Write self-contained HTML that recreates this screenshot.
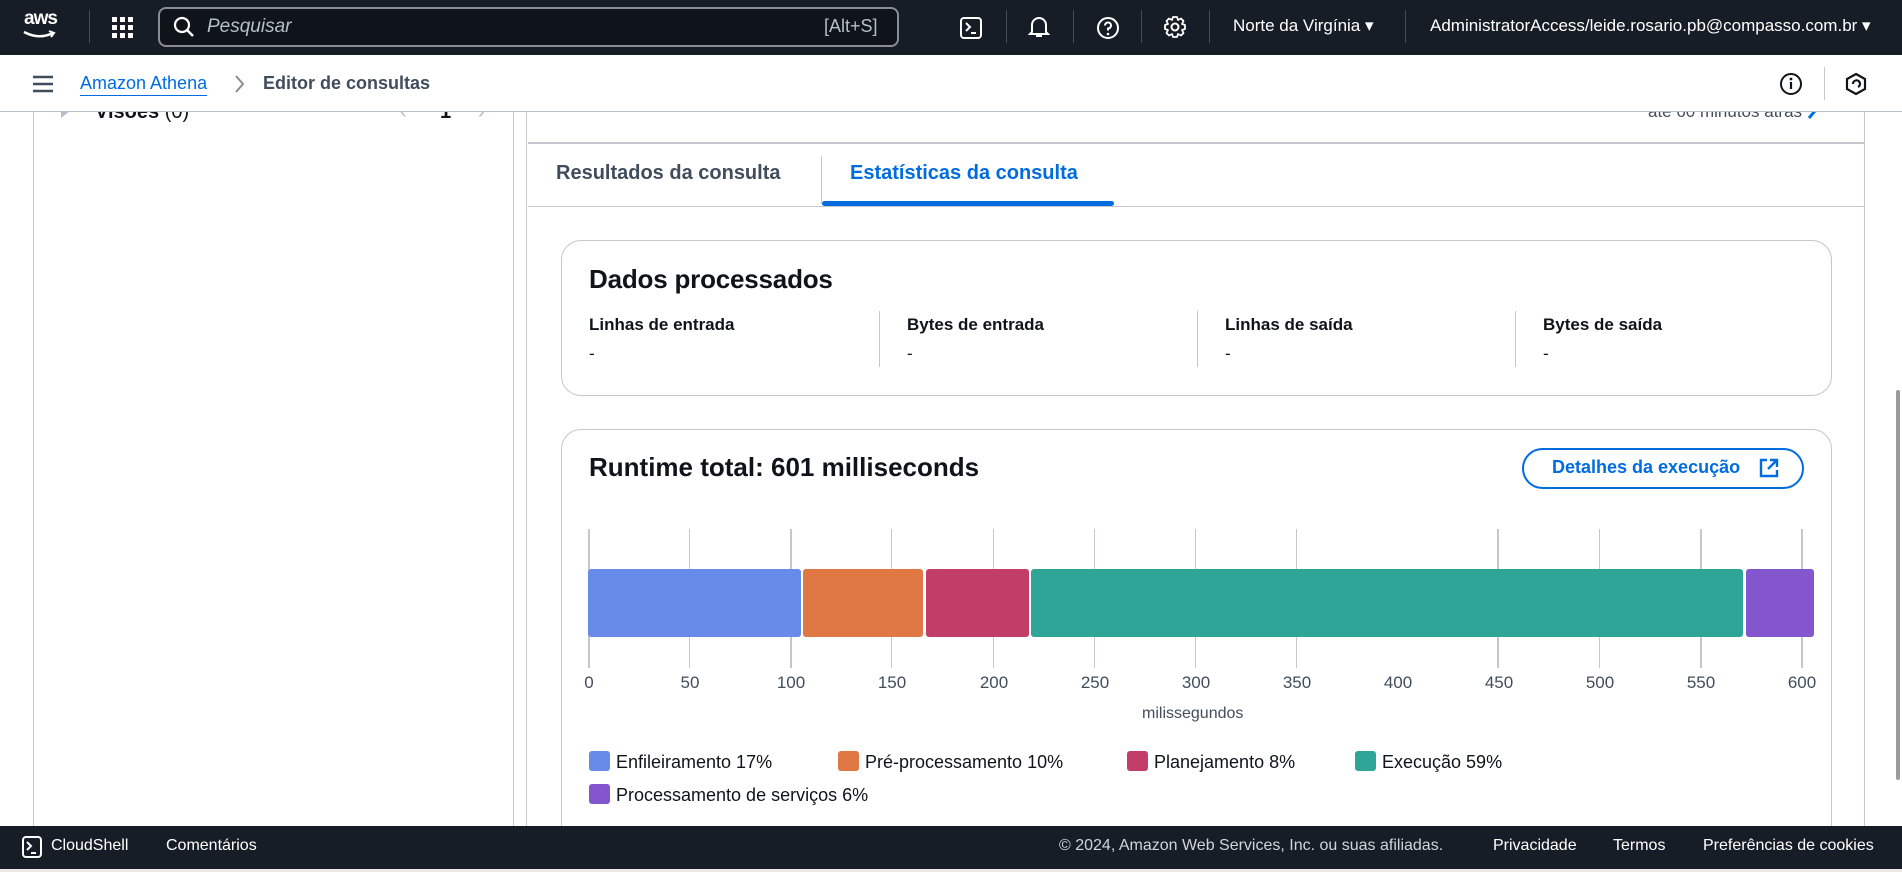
<!DOCTYPE html>
<html><head><meta charset="utf-8"><style>
*{box-sizing:border-box;margin:0;padding:0}
body{width:1902px;height:872px;overflow:hidden;background:#fff;font-family:"Liberation Sans",sans-serif;color:#0f141a;position:relative}
.a{position:absolute;white-space:nowrap}
.top{left:0;top:0;width:1902px;height:55px;background:#161d26}
.foot{left:0;top:826px;width:1902px;height:43px;background:#161d26}
.wt{color:#fff;font-size:17px}
.sep{position:absolute;width:1px;background:#414d5c}
.card{position:absolute;border:1px solid #c6c6cd;border-radius:20px;background:#fff}
.lbl{font-size:17px;font-weight:bold}
.tick{position:absolute;top:673px;font-size:17px;color:#414d5c;transform:translateX(-50%)}
.grid{position:absolute;top:529px;height:139px;width:2px;background:#c6c6cd}
.bar{position:absolute;top:569px;height:68px;border-radius:3px}
.sw{position:absolute;width:21px;height:20px;border-radius:3px}
.lg{position:absolute;font-size:18px;color:#0f141a}
</style></head><body>
<div class="a top"></div>
<div class="a" style="left:24px;top:8px;color:#fff;font-size:19px;font-weight:bold;letter-spacing:-1px">aws</div>
<svg class="a" style="left:22px;top:30px" width="34" height="10"><path d="M2 2 Q17 10 31 3" stroke="#fff" stroke-width="2.5" fill="none"/><path d="M27 1 L32 3 L29 7" stroke="#fff" stroke-width="2" fill="none"/></svg>
<div class="sep" style="left:89px;top:10px;height:33px"></div>
<svg class="a" style="left:112px;top:17px" width="22" height="22" fill="#fff"><rect x="0" y="0" width="5" height="5"/><rect x="8" y="0" width="5" height="5"/><rect x="16" y="0" width="5" height="5"/><rect x="0" y="8" width="5" height="5"/><rect x="8" y="8" width="5" height="5"/><rect x="16" y="8" width="5" height="5"/><rect x="0" y="16" width="5" height="5"/><rect x="8" y="16" width="5" height="5"/><rect x="16" y="16" width="5" height="5"/></svg>
<div class="a" style="left:158px;top:7px;width:741px;height:40px;border:2px solid #8c8c94;border-radius:8px;background:#0f141a"></div>
<svg class="a" style="left:173px;top:16px" width="22" height="22"><circle cx="9" cy="9" r="7" stroke="#fff" stroke-width="2.2" fill="none"/><path d="M14 14 L20 20" stroke="#fff" stroke-width="2.5"/></svg>
<div class="a" style="left:207px;top:16px;color:#b6bec9;font-size:19px;font-style:italic">Pesquisar</div>
<div class="a" style="left:824px;top:16px;color:#b6bec9;font-size:18px">[Alt+S]</div>
<svg class="a" style="left:960px;top:17px" width="22" height="22"><rect x="1" y="1" width="20" height="20" rx="3" stroke="#fff" stroke-width="2" fill="none"/><path d="M6 6 L10 10 L6 14 M11 16 H16" stroke="#fff" stroke-width="2" fill="none"/></svg>
<div class="sep" style="left:1006px;top:10px;height:33px"></div>
<svg class="a" style="left:1028px;top:15px" width="22" height="24"><path d="M4 17 V10 A7 7 0 0 1 18 10 V17 L20 19 H2 Z M8 21 H14" stroke="#fff" stroke-width="2" fill="none"/></svg>
<div class="sep" style="left:1073px;top:10px;height:33px"></div>
<svg class="a" style="left:1096px;top:16px" width="24" height="24"><circle cx="12" cy="12" r="10" stroke="#fff" stroke-width="2" fill="none"/><path d="M9 9.5 A3 3 0 1 1 12 12.5 V14.5" stroke="#fff" stroke-width="2" fill="none"/><circle cx="12" cy="18" r="1.3" fill="#fff"/></svg>
<div class="sep" style="left:1141px;top:10px;height:33px"></div>
<svg class="a" style="left:1163px;top:15px" width="24" height="24"><circle cx="12" cy="12" r="3.5" stroke="#fff" stroke-width="2" fill="none"/><path d="M10 2 H14 L15 5 L18 3.5 L20.5 6 L19 9 L22 10 V14 L19 15 L20.5 18 L18 20.5 L15 19 L14 22 H10 L9 19 L6 20.5 L3.5 18 L5 15 L2 14 V10 L5 9 L3.5 6 L6 3.5 L9 5 Z" stroke="#fff" stroke-width="1.8" fill="none" stroke-linejoin="round"/></svg>
<div class="sep" style="left:1209px;top:10px;height:33px"></div>
<div class="a wt" style="left:1233px;top:16px">Norte da Virgínia ▾</div>
<div class="sep" style="left:1405px;top:10px;height:33px"></div>
<div class="a wt" style="left:1430px;top:16px">AdministratorAccess/leide.rosario.pb@compasso.com.br ▾</div>

<!-- breadcrumb -->
<div class="a" style="left:0;top:111px;width:1902px;height:1px;background:#b6bec9"></div>
<svg class="a" style="left:33px;top:75px" width="20" height="18"><path d="M0 2H20M0 9H20M0 16H20" stroke="#414d5c" stroke-width="2.5"/></svg>
<div class="a" style="left:80px;top:73px;font-size:18px;color:#006ce0;border-bottom:1.5px solid #006ce0;padding-bottom:1px">Amazon Athena</div>
<svg class="a" style="left:233px;top:74px" width="12" height="20"><path d="M3 2 L10 10 L3 18" stroke="#8c8c94" stroke-width="2" fill="none"/></svg>
<div class="a" style="left:263px;top:73px;font-size:18px;font-weight:bold;color:#414d5c">Editor de consultas</div>
<svg class="a" style="left:1779px;top:72px" width="24" height="24"><circle cx="12" cy="12" r="10" stroke="#0f141a" stroke-width="2" fill="none"/><path d="M12 10V17" stroke="#0f141a" stroke-width="2.2"/><circle cx="12" cy="7" r="1.4" fill="#0f141a"/></svg>
<div class="a" style="left:1824px;top:67px;width:1px;height:33px;background:#c6c6cd"></div>
<svg class="a" style="left:1845px;top:72px" width="22" height="24"><path d="M11 2 L20 7 V17 L11 22 L2 17 V7 Z" stroke="#0f141a" stroke-width="2.2" fill="none"/><path d="M8 12 A3.5 3.5 0 1 1 13 15" stroke="#0f141a" stroke-width="2.2" fill="none"/></svg>

<!-- left panel -->
<div class="a" style="left:33px;top:112px;width:1px;height:714px;background:#c6c6cd"></div>
<div class="a" style="left:513px;top:112px;width:1px;height:714px;background:#c6c6cd"></div>
<div class="a" style="left:526px;top:112px;width:1px;height:714px;background:#c6c6cd"></div>
<div class="a" style="left:0;top:112px;width:1902px;height:12px;overflow:hidden">
 <div class="a" style="left:61px;top:-8px;width:0;height:0;border-left:9px solid #b6bec9;border-top:7px solid transparent;border-bottom:7px solid transparent"></div>
 <div class="a" style="left:95px;top:-11px;font-size:20px;font-weight:bold">Visões <span style="font-weight:normal">(0)</span></div>
 <div class="a" style="left:400px;top:-11px;font-size:20px;color:#b6bec9">‹</div>
 <div class="a" style="left:440px;top:-11px;font-size:20px;font-weight:bold">1</div>
 <div class="a" style="left:478px;top:-11px;font-size:20px;color:#b6bec9">›</div>
 <div class="a" style="left:1648px;top:-10px;font-size:17px;color:#414d5c">até 60 minutos atrás</div>
 <svg class="a" style="left:1806px;top:-10px" width="18" height="20"><path d="M3 16 L14 3" stroke="#006ce0" stroke-width="3"/></svg>
</div>
<div class="a" style="left:1864px;top:112px;width:1px;height:714px;background:#c6c6cd"></div>
<div class="a" style="left:1896px;top:390px;width:4px;height:390px;background:#9b9b9b;border-radius:2px"></div>

<!-- tabs -->
<div class="a" style="left:528px;top:142px;width:1336px;height:2px;background:#c6c6cd"></div>
<div class="a" style="left:528px;top:206px;width:1336px;height:1px;background:#c6c6cd"></div>
<div class="a" style="left:556px;top:162px;font-size:20px;font-weight:bold;color:#414d5c">Resultados da consulta</div>
<div class="a" style="left:821px;top:156px;width:1px;height:48px;background:#c6c6cd"></div>
<div class="a" style="left:850px;top:162px;font-size:20px;font-weight:bold;color:#006ce0">Estatísticas da consulta</div>
<div class="a" style="left:822px;top:201px;width:292px;height:5px;background:#006ce0;border-radius:3px"></div>

<!-- card 1 -->
<div class="card" style="left:561px;top:240px;width:1271px;height:156px"></div>
<div class="a" style="left:589px;top:264px;font-size:26px;font-weight:bold;letter-spacing:-0.2px">Dados processados</div>
<div class="a lbl" style="left:589px;top:315px">Linhas de entrada</div>
<div class="a lbl" style="left:907px;top:315px">Bytes de entrada</div>
<div class="a lbl" style="left:1225px;top:315px">Linhas de saída</div>
<div class="a lbl" style="left:1543px;top:315px">Bytes de saída</div>
<div class="a" style="left:589px;top:344px;font-size:17px">-</div>
<div class="a" style="left:907px;top:344px;font-size:17px">-</div>
<div class="a" style="left:1225px;top:344px;font-size:17px">-</div>
<div class="a" style="left:1543px;top:344px;font-size:17px">-</div>
<div class="a" style="left:879px;top:311px;width:1px;height:56px;background:#c6c6cd"></div>
<div class="a" style="left:1197px;top:311px;width:1px;height:56px;background:#c6c6cd"></div>
<div class="a" style="left:1515px;top:311px;width:1px;height:56px;background:#c6c6cd"></div>

<!-- card 2 -->
<div class="card" style="left:561px;top:429px;width:1271px;height:440px"></div>
<div class="a" style="left:589px;top:452px;font-size:26px;font-weight:bold">Runtime total: 601 milliseconds</div>
<div class="a" style="left:1522px;top:448px;width:282px;height:41px;border:2px solid #006ce0;border-radius:21px"></div>
<div class="a" style="left:1552px;top:457px;font-size:18px;font-weight:bold;color:#006ce0">Detalhes da execução</div>
<svg class="a" style="left:1759px;top:458px" width="20" height="20"><path d="M8 2 H2 V18 H18 V12 M11 2 H18 V9 M18 2 L9 11" stroke="#006ce0" stroke-width="2.4" fill="none"/></svg>

<div class="grid" style="left:588px"></div><div class="grid" style="left:689px;width:1px"></div><div class="grid" style="left:790px"></div><div class="grid" style="left:891px;width:1px"></div><div class="grid" style="left:993px;width:1px"></div><div class="grid" style="left:1094px;width:1px"></div><div class="grid" style="left:1195px;width:1px"></div><div class="grid" style="left:1296px;width:1px"></div><div class="grid" style="left:1497px"></div><div class="grid" style="left:1599px;width:1px"></div><div class="grid" style="left:1700px"></div><div class="grid" style="left:1801px"></div>
<div class="bar" style="left:588px;width:213px;background:#688ae8"></div>
<div class="bar" style="left:803px;width:120px;background:#df7843"></div>
<div class="bar" style="left:926px;width:103px;background:#c33d69"></div>
<div class="bar" style="left:1031px;width:712px;background:#2ea597"></div>
<div class="bar" style="left:1746px;width:68px;background:#8456ce"></div>
<div class="tick" style="left:589px">0</div><div class="tick" style="left:690px">50</div><div class="tick" style="left:791px">100</div><div class="tick" style="left:892px">150</div><div class="tick" style="left:994px">200</div><div class="tick" style="left:1095px">250</div><div class="tick" style="left:1196px">300</div><div class="tick" style="left:1297px">350</div><div class="tick" style="left:1398px">400</div><div class="tick" style="left:1499px">450</div><div class="tick" style="left:1600px">500</div><div class="tick" style="left:1701px">550</div><div class="tick" style="left:1802px">600</div>
<div class="a" style="left:1142px;top:705px;font-size:16px;color:#414d5c">milissegundos</div>

<div class="sw" style="left:589px;top:751px;background:#688ae8"></div><div class="lg" style="left:616px;top:752px">Enfileiramento 17%</div>
<div class="sw" style="left:838px;top:751px;background:#df7843"></div><div class="lg" style="left:865px;top:752px">Pré-processamento 10%</div>
<div class="sw" style="left:1127px;top:751px;background:#c33d69"></div><div class="lg" style="left:1154px;top:752px">Planejamento 8%</div>
<div class="sw" style="left:1355px;top:751px;background:#2ea597"></div><div class="lg" style="left:1382px;top:752px">Execução 59%</div>
<div class="sw" style="left:589px;top:784px;background:#8456ce"></div><div class="lg" style="left:616px;top:785px">Processamento de serviços 6%</div>

<!-- footer -->
<div class="a foot"></div>
<div class="a" style="left:0;top:869px;width:1902px;height:3px;background:#ece9e4"></div>
<svg class="a" style="left:22px;top:836px" width="20" height="22"><rect x="1" y="1" width="18" height="20" rx="3" stroke="#fff" stroke-width="2" fill="none"/><path d="M5 6 L9 10 L5 14 M9 17 H14" stroke="#fff" stroke-width="2" fill="none"/></svg>
<div class="a wt" style="left:51px;top:837px;font-size:16px">CloudShell</div>
<div class="a wt" style="left:166px;top:837px;font-size:16px">Comentários</div>
<div class="a wt" style="left:1059px;top:837px;font-size:16px;color:#d1d5db">© 2024, Amazon Web Services, Inc. ou suas afiliadas.</div>
<div class="a wt" style="left:1493px;top:837px;font-size:16px">Privacidade</div>
<div class="a wt" style="left:1613px;top:837px;font-size:16px">Termos</div>
<div class="a wt" style="left:1703px;top:837px;font-size:16px">Preferências de cookies</div>
</body></html>
